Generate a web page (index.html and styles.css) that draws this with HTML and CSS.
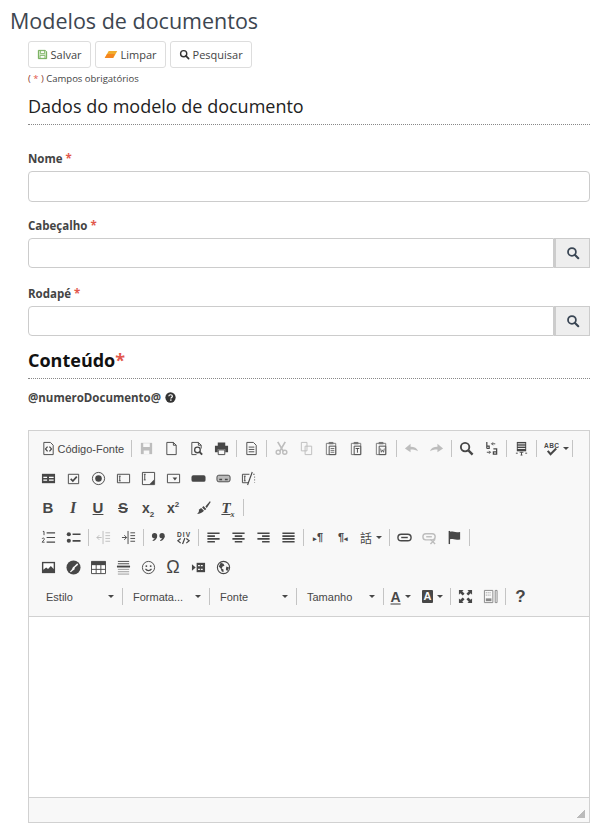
FILE: index.html
```html
<!DOCTYPE html>
<html lang="pt-BR">
<head>
    <meta charset="UTF-8">
    <meta name="viewport" content="width=device-width, initial-scale=1.0">
    <title>Modelos de documentos</title>
    <link rel="stylesheet" href="styles.css">
</head>
<body>
    <h1 class="titulo">Modelos de documentos</h1>

    <main class="pagina">
        <!-- Botoes de acao -->
        <div class="acoes">
            <button class="botao" type="button">
                <svg class="ico-botao" viewBox="0 0 16 16"><path d="M2 2h10l2 2v10H2z" fill="#cfe6c4" stroke="#6aa84f" stroke-width="1.4"/><path d="M5 2.500h6v4H5zM4.500 9.500h7v4h-7z" fill="#fff" stroke="#6aa84f"/></svg>
                Salvar
            </button>
            <button class="botao" type="button">
                <svg class="ico-botao ico-borracha" viewBox="0 2 18 11"><path d="M6 3h11l-5 9H1z" fill="#f0ad2e"/><path d="M4 7h10l-2.600 5H1z" fill="#f5861f"/></svg>
                Limpar
            </button>
            <button class="botao" type="button">
                <svg class="ico-botao" viewBox="0 0 16 16"><circle cx="6.800" cy="6.800" r="4.500" fill="none" stroke="#333" stroke-width="2"/><path d="M10 10l4 4" stroke="#333" stroke-width="2.400" stroke-linecap="round"/></svg>
                Pesquisar
            </button>
        </div>
        <p class="obrigatorios"><span class="parentese">( <span class="asterisco">*</span> )</span> Campos obrigatórios</p>

        <h2 class="secao">Dados do modelo de documento</h2>

        <div class="campo campo-nome">
            <label class="rotulo" for="nome">Nome <span class="asterisco">*</span></label>
            <input class="entrada" id="nome" type="text">
        </div>

        <div class="campo">
            <label class="rotulo" for="cabecalho">Cabeçalho <span class="asterisco">*</span></label>
            <div class="grupo">
                <input class="entrada entrada-grupo" id="cabecalho" type="text">
                <button class="lupa" type="button" aria-label="Pesquisar"><svg viewBox="0 0 16 16"><circle cx="6.800" cy="6.800" r="4.500" fill="none" stroke="#3a4654" stroke-width="2"/><path d="M10 10l4 4" stroke="#3a4654" stroke-width="2.400" stroke-linecap="round"/></svg></button>
            </div>
        </div>

        <div class="campo">
            <label class="rotulo" for="rodape">Rodapé <span class="asterisco">*</span></label>
            <div class="grupo">
                <input class="entrada entrada-grupo" id="rodape" type="text">
                <button class="lupa" type="button" aria-label="Pesquisar"><svg viewBox="0 0 16 16"><circle cx="6.800" cy="6.800" r="4.500" fill="none" stroke="#3a4654" stroke-width="2"/><path d="M10 10l4 4" stroke="#3a4654" stroke-width="2.400" stroke-linecap="round"/></svg></button>
            </div>
        </div>

        <h2 class="secao secao-conteudo">Conteúdo<span class="asterisco">*</span></h2>

        <p class="variavel">@numeroDocumento@
            <svg class="ico-ajuda" viewBox="0 0 16 16"><circle cx="8" cy="8" r="7.500" fill="#333"/><path d="M5.500 6.200C5.700 4.700 6.800 4 8.100 4c1.500 0 2.600.9 2.600 2.200 0 1.900-2.100 1.800-2.100 3.300" fill="none" stroke="#fff" stroke-width="1.800"/><rect x="7.500" y="10.800" width="2" height="2" fill="#fff"/></svg>
        </p>

        <!-- Editor de texto -->
        <section class="editor">
            <div class="barra">
                <div class="linha">
                    <span class="btn btn-fonte"><svg class="ico" viewBox="0 0 16 16"><path d="M3 1.500h7l3 3v10H3z" fill="none" stroke="currentColor"/><path d="M7 6L4.800 8.500 7 11M9 6l2.200 2.500L9 11" fill="none" stroke="currentColor" stroke-width="1.300"/></svg><span class="btn-texto">Código-Fonte</span></span>
                    <i class="sep"></i>
                    <span class="btn off"><svg class="ico" viewBox="0 0 16 16"><path d="M2 2h12v12H2z" fill="currentColor"/><path d="M4.500 2.500h7v4h-7zM5 10h6v4H5z" fill="#f8f8f8"/></svg></span>
                    <span class="btn"><svg class="ico" viewBox="0 0 16 16"><path d="M3 1.500h7l3 3v10H3zM10 1.500v3h3" fill="none" stroke="currentColor"/></svg></span>
                    <span class="btn"><svg class="ico" viewBox="0 0 16 16"><path d="M3 14.500v-13h7l3 3V8M10 1.500v3h3M3 14.500h5" fill="none" stroke="currentColor"/><circle cx="9" cy="9.500" r="3" fill="none" stroke="currentColor" stroke-width="1.400"/><path d="M11 11.500l3 3" stroke="currentColor" stroke-width="2"/></svg></span>
                    <span class="btn"><svg class="ico" viewBox="0 0 16 16"><path d="M4 1.500h8V5H4zM1 5h14v7h-3V9H4v3H1z" fill="currentColor"/><path d="M4.500 9.500h7v5h-7z" fill="#f8f8f8" stroke="currentColor"/></svg></span>
                    <i class="sep"></i>
                    <span class="btn"><svg class="ico" viewBox="0 0 16 16"><path d="M3 1.500h7l3 3v10H3z" fill="none" stroke="currentColor"/><path d="M5 6.500h6M5 9h6M5 11.500h6" stroke="currentColor"/></svg></span>
                    <i class="sep"></i>
                    <span class="btn off"><svg class="ico" viewBox="0 0 16 16"><circle cx="4.500" cy="12" r="2.200" fill="none" stroke="currentColor" stroke-width="1.500"/><circle cx="11.500" cy="12" r="2.200" fill="none" stroke="currentColor" stroke-width="1.500"/><path d="M4 1l6 10M12 1L6 11" stroke="currentColor" stroke-width="1.800"/></svg></span>
                    <span class="btn off"><svg class="ico" viewBox="0 0 16 16"><path d="M2.500 1.500h6v9h-6zM6.500 5.500h7v9h-7z" fill="#f8f8f8" stroke="currentColor"/></svg></span>
                    <span class="btn"><svg class="ico" viewBox="0 0 16 16"><path d="M2.500 2.500h10v12h-10z" fill="none" stroke="#777"/><path d="M5 1h5v2.500H5z" fill="#777"/><path d="M5.500 5.500h7v9h-7z" fill="#f8f8f8" stroke="currentColor"/><path d="M7 8h4M7 10h4M7 12h4" stroke="currentColor" stroke-width=".8"/></svg></span>
                    <span class="btn"><svg class="ico" viewBox="0 0 16 16"><path d="M2.500 2.500h10v12h-10z" fill="none" stroke="#777"/><path d="M5 1h5v2.500H5z" fill="#777"/><path d="M5.500 5.500h7v9h-7z" fill="#f8f8f8" stroke="currentColor"/><path d="M7 8h4M9 8v4.500" stroke="currentColor"/></svg></span>
                    <span class="btn"><svg class="ico" viewBox="0 0 16 16"><path d="M2.500 2.500h10v12h-10z" fill="none" stroke="#777"/><path d="M5 1h5v2.500H5z" fill="#777"/><path d="M5.500 5.500h7v9h-7z" fill="#f8f8f8" stroke="currentColor"/><path d="M7 8l.8 4 1.200-2.500 1.200 2.500.8-4" fill="none" stroke="currentColor" stroke-width=".8"/></svg></span>
                    <i class="sep"></i>
                    <span class="btn off"><svg class="ico" viewBox="0 0 16 16"><path d="M1 8l6-5v3c4 0 7 1.500 8 5-2-1.500-4-2-8-2v3z" fill="currentColor"/></svg></span>
                    <span class="btn off"><svg class="ico" viewBox="0 0 16 16"><path d="M15 8L9 3v3c-4 0-7 1.500-8 5 2-1.500 4-2 8-2v3z" fill="currentColor"/></svg></span>
                    <i class="sep"></i>
                    <span class="btn"><svg class="ico" viewBox="0 0 16 16"><circle cx="6.500" cy="6.500" r="4.500" fill="none" stroke="currentColor" stroke-width="2"/><path d="M10 10l4.500 4.500" stroke="currentColor" stroke-width="2.500"/></svg></span>
                    <span class="btn"><svg class="ico" viewBox="0 0 16 16"><path d="M3 1v7M3 5.500h2.500v2.500H3" fill="none" stroke="currentColor" stroke-width="1.300"/><path d="M8.500 3h3.500M9.500 1.500L8 3l1.500 1.500M3 12h3.500M5.500 10.500L7 12l-1.500 1.500" fill="none" stroke="currentColor"/><path d="M10 8.500h3.500V14H10v-2.500h3.500" fill="none" stroke="currentColor" stroke-width="1.300"/></svg></span>
                    <i class="sep"></i>
                    <span class="btn"><svg class="ico" viewBox="0 0 16 16"><path d="M3 1h10v10H3z" fill="currentColor"/><path d="M4 3h8M4 5.500h8M4 8h8" stroke="#f8f8f8"/><path d="M2 13h2M6 12h4M8 12v3M7 15h2M12 13h2" stroke="currentColor"/></svg></span>
                    <i class="sep"></i>
                    <span class="btn btn-seta"><svg class="ico" viewBox="0 0 16 16"><text class="ico-texto" x="0" y="7" textLength="16">ABC</text><path d="M4 10.500l3 3.500 6-6" fill="none" stroke="currentColor" stroke-width="2.200"/></svg><i class="seta"></i></span>
                    <i class="sep"></i>
                </div>

                <div class="linha">
                    <span class="btn"><svg class="ico" viewBox="0 0 16 16"><path d="M1 3h14v10H1z" fill="currentColor"/><path d="M2.500 6h4v1.500h-4zM2.500 9h4v1.500h-4zM8.500 6h5v1.500h-5zM8.500 9h5v1.500h-5z" fill="#fff"/></svg></span>
                    <span class="btn"><svg class="ico" viewBox="0 0 16 16"><path d="M2.500 3.500h11v10h-11z" fill="none" stroke="currentColor"/><path d="M5 8.500l2.300 2.300L11.500 6" fill="none" stroke="currentColor" stroke-width="1.800"/></svg></span>
                    <span class="btn"><svg class="ico" viewBox="0 0 16 16"><circle cx="8" cy="8" r="6.500" fill="none" stroke="currentColor"/><circle cx="8" cy="8" r="3.500" fill="currentColor"/></svg></span>
                    <span class="btn"><svg class="ico" viewBox="0 0 16 16"><path d="M1.500 3.500h13v9h-13z" fill="none" stroke="currentColor"/><path d="M3 5.500h2M4 5.500v5M3 10.500h2" stroke="currentColor"/></svg></span>
                    <span class="btn"><svg class="ico" viewBox="0 0 16 16"><path d="M1.500 1.500h13v13h-13z" fill="none" stroke="currentColor"/><path d="M3 3.500h2M4 3.500v6M3 9.500h2" stroke="currentColor"/><path d="M14 9v5H9z" fill="currentColor"/></svg></span>
                    <span class="btn"><svg class="ico" viewBox="0 0 16 16"><path d="M1.500 3.500h13v9h-13z" fill="none" stroke="currentColor"/><path d="M7 7h5l-2.500 3z" fill="currentColor"/></svg></span>
                    <span class="btn"><svg class="ico" viewBox="0 0 16 16"><rect x="0.500" y="4.500" width="15" height="7" rx="2" fill="currentColor"/></svg></span>
                    <span class="btn"><svg class="ico" viewBox="0 0 16 16"><rect x="1" y="4.500" width="14" height="7" rx="2" fill="#bbb" stroke="currentColor"/><path d="M3.500 9h3M9.500 9h3" stroke="currentColor" stroke-width="1.500"/></svg></span>
                    <span class="btn"><svg class="ico" viewBox="0 0 16 16"><path d="M9 3.500H1.500v9h6M13 3.500h1.500M14.500 6v1M14.500 9v1M14.500 12v.500" fill="none" stroke="currentColor"/><path d="M3 5.500h2M4 5.500v5M3 10.500h2" stroke="currentColor"/><path d="M12 1L7 15" stroke="currentColor" stroke-width="1.200"/></svg></span>
                </div>

                <div class="linha">
                    <span class="btn"><b class="glifo glifo-letra">B</b></span>
                    <span class="btn"><b class="glifo glifo-i">I</b></span>
                    <span class="btn"><b class="glifo glifo-letra glifo-u">U</b></span>
                    <span class="btn"><b class="glifo glifo-letra glifo-s">S</b></span>
                    <span class="btn"><b class="glifo">x<sub class="indice">2</sub></b></span>
                    <span class="btn"><b class="glifo">x<sup class="indice">2</sup></b></span>
                    <i class="espaco"></i>
                    <span class="btn"><svg class="ico" viewBox="0 0 16 16"><path d="M15 1l-5 6 1.500 1.500L15.500 2.500z" fill="currentColor"/><path d="M8 6.500l3 3-1.500 1.500-3-3zM5.500 8.500l3 3C7 13.500 4 15 1 15c2-1.500 2.500-3 2-4.500z" fill="currentColor"/></svg></span>
                    <span class="btn"><b class="glifo glifo-i glifo-t">T<sub class="indice">x</sub></b></span>
                    <i class="sep"></i>
                </div>

                <div class="linha">
                    <span class="btn"><svg class="ico" viewBox="0 0 16 16"><path d="M6 3h9M6 8h9M6 13h9" stroke="currentColor" stroke-width="1.300"/><path d="M2 1.500h1.200v4M1 9.500c1-1.500 3-1 2.500.5L1.200 13h2.600" fill="none" stroke="currentColor"/></svg></span>
                    <span class="btn"><svg class="ico" viewBox="0 0 16 16"><circle cx="3" cy="4.500" r="2.200" fill="currentColor"/><circle cx="3" cy="11.500" r="2.200" fill="currentColor"/><path d="M7 4.500h8.500M7 11.500h8.500" stroke="currentColor" stroke-width="1.800"/></svg></span>
                    <i class="sep"></i>
                    <span class="btn off"><svg class="ico" viewBox="0 0 16 16"><path d="M7.500 1v14M10 3h5M10 6h5M10 9h5M10 12h5M1 8h5M3.500 5.500L1 8l2.500 2.500" fill="none" stroke="currentColor"/></svg></span>
                    <span class="btn"><svg class="ico" viewBox="0 0 16 16"><path d="M7.500 1v14M10 3h5M10 6h5M10 9h5M10 12h5M1 8h5M3.500 5.500L6 8l-2.500 2.500" fill="none" stroke="currentColor"/></svg></span>
                    <i class="sep"></i>
                    <span class="btn"><svg class="ico" viewBox="0 0 16 16"><circle cx="3.800" cy="6" r="2.800" fill="currentColor"/><path d="M6.600 6c0 3-2 5-4.500 5.800l-.5-1C3.500 10 4.500 8.500 4.500 7z" fill="currentColor"/><circle cx="11.800" cy="6" r="2.800" fill="currentColor"/><path d="M14.600 6c0 3-2 5-4.500 5.800l-.5-1c1.900-.8 2.900-2.300 2.900-3.800z" fill="currentColor"/></svg></span>
                    <span class="btn"><svg class="ico" viewBox="0 0 16 16"><text class="ico-texto" x="1" y="7" textLength="14">DIV</text><path d="M5 9l-3 2.500L5 14M11 9l3 2.500-3 2.500M9.500 8.500L7 15" fill="none" stroke="currentColor" stroke-width="1.300"/></svg></span>
                    <i class="sep"></i>
                    <span class="btn"><svg class="ico" viewBox="0 0 16 16"><path d="M1.500 2.500h13M1.500 5.500h8M1.500 8.500h13M1.500 11.500h8" stroke="currentColor" stroke-width="1.700" transform="translate(0 1)"/></svg></span>
                    <span class="btn"><svg class="ico" viewBox="0 0 16 16"><path d="M1.500 3.500h13M4 6.500h8M1.500 9.500h13M4 12.500h8" stroke="currentColor" stroke-width="1.700"/></svg></span>
                    <span class="btn"><svg class="ico" viewBox="0 0 16 16"><path d="M1.500 3.500h13M6.500 6.500h8M1.500 9.500h13M6.500 12.500h8" stroke="currentColor" stroke-width="1.700"/></svg></span>
                    <span class="btn"><svg class="ico" viewBox="0 0 16 16"><path d="M1.500 3.500h13M1.500 6.500h13M1.500 9.500h13M1.500 12.500h13" stroke="currentColor" stroke-width="1.700"/></svg></span>
                    <i class="sep"></i>
                    <span class="btn"><b class="glifo glifo-p"><small class="seta-p">▸</small>¶</b></span>
                    <span class="btn"><b class="glifo glifo-p">¶<small class="seta-p">◂</small></b></span>
                    <span class="btn btn-seta"><span class="glifo glifo-lang">話</span><i class="seta"></i></span>
                    <i class="sep"></i>
                    <span class="btn"><svg class="ico" viewBox="0 0 16 16"><rect x="1" y="4.500" width="14" height="7" rx="3.500" fill="none" stroke="currentColor" stroke-width="1.500"/><path d="M4.500 8h7" stroke="currentColor" stroke-width="1.500"/></svg></span>
                    <span class="btn off"><svg class="ico" viewBox="0 0 16 16"><rect x="1" y="4" width="13" height="6.500" rx="3" fill="none" stroke="currentColor" stroke-width="1.500"/><path d="M4.500 7.200h6" stroke="currentColor" stroke-width="1.500"/><path d="M9 10l5 5M14 10l-5 5" stroke="currentColor" stroke-width="1.500"/></svg></span>
                    <span class="btn"><svg class="ico" viewBox="0 0 16 16"><path d="M2.500 1v14" stroke="currentColor" stroke-width="1.500"/><path d="M3 2c3-1 5 1 11 0v8c-6 1-8-1-11 0z" fill="currentColor"/></svg></span>
                    <i class="sep"></i>
                </div>

                <div class="linha">
                    <span class="btn"><svg class="ico" viewBox="0 0 16 16"><path d="M1 2h14v12H1z" fill="currentColor"/><path d="M2.500 3.500h11v6l-3-3-3 3-2-1.500-3 2.500z" fill="#fff"/></svg></span>
                    <span class="btn"><svg class="ico" viewBox="0 0 16 16"><circle cx="8" cy="8" r="7.500" fill="currentColor"/><path d="M12 3.500L8.500 7l-1 .5-1.500 3-1.800 1.800 1 .7L7 11.500l2-1.500.500-2 3.500-3z" fill="#f8f8f8"/></svg></span>
                    <span class="btn"><svg class="ico" viewBox="0 0 16 16"><path d="M.5 1.500h15v13H.5z" fill="#fff" stroke="currentColor"/><path d="M.5 1.500h15v4H.5z" fill="currentColor"/><path d="M.5 10h15M5.500 5v9.500M10.500 5v9.500" stroke="currentColor"/></svg></span>
                    <span class="btn"><svg class="ico" viewBox="0 0 16 16"><path d="M2 1.500h12M2 4h12" stroke="currentColor"/><path d="M1 7h14" stroke="currentColor" stroke-width="2"/><path d="M2 10h12M2 12.500h12M2 15h12" stroke="#999"/></svg></span>
                    <span class="btn"><svg class="ico" viewBox="0 0 16 16"><circle cx="8" cy="8" r="6.500" fill="none" stroke="currentColor"/><circle cx="5.700" cy="6.500" r="1" fill="currentColor"/><circle cx="10.300" cy="6.500" r="1" fill="currentColor"/><path d="M4.800 9.500c1.500 2.400 4.900 2.400 6.400 0" fill="none" stroke="currentColor" stroke-width="1.200"/></svg></span>
                    <span class="btn"><span class="glifo glifo-omega">Ω</span></span>
                    <span class="btn"><svg class="ico" viewBox="0 0 16 16"><path d="M1 4.500l4 3.500-4 3.500z" fill="currentColor"/><path d="M6 3h9v10H6z" fill="currentColor"/><path d="M7.500 6h6M7.500 10h6" stroke="#f8f8f8" stroke-width="1.200" stroke-dasharray="2 1"/></svg></span>
                    <span class="btn"><svg class="ico" viewBox="0 0 16 16"><circle cx="8" cy="8" r="6.500" fill="none" stroke="currentColor" stroke-width="1.200"/><path d="M5 3l3 1 1 2-2 1-1 2 2 1v3l-2-1-1-3-2-2zM11 7l3 1-2 4-1.500-2z" fill="currentColor"/></svg></span>
                </div>

                <div class="linha linha-combos">
                    <span class="combo">Estilo<i class="seta"></i></span>
                    <i class="sep"></i>
                    <span class="combo">Formata...<i class="seta"></i></span>
                    <i class="sep"></i>
                    <span class="combo">Fonte<i class="seta"></i></span>
                    <i class="sep"></i>
                    <span class="combo">Tamanho<i class="seta"></i></span>
                    <i class="sep"></i>
                    <span class="btn btn-seta"><span class="glifo glifo-a">A</span><i class="seta"></i></span>
                    <span class="btn btn-seta"><span class="glifo glifo-af">A</span><i class="seta"></i></span>
                    <i class="sep"></i>
                    <span class="btn"><svg class="ico" viewBox="0 0 16 16"><path d="M1 1h5L4.500 2.500 7 5 5 7 2.500 4.500 1 6zM15 1v5l-1.500-1.500L11 7 9 5l2.500-2.500L10 1zM1 15v-5l1.500 1.500L5 9l2 2-2.500 2.500L6 15zM15 15h-5l1.500-1.500L9 11l2-2 2.500 2.500L15 10z" fill="currentColor"/></svg></span>
                    <span class="btn off-medio"><svg class="ico" viewBox="0 0 16 16"><path d="M1.500 1.500h9v13h-9zM13 1.500h2v13h-2z" fill="none" stroke="currentColor"/><path d="M3 10h6v3H3z" fill="currentColor"/><path d="M3 4h6M3 6.500h6" stroke="currentColor" stroke-dasharray="1 1"/></svg></span>
                    <i class="sep"></i>
                    <span class="btn"><span class="glifo glifo-ajuda">?</span></span>
                </div>
            </div>

            <div class="area"></div>

            <div class="rodape-editor"><i class="redimensionar"></i></div>
        </section>
    </main>
</body>
</html>
```

FILE: styles.css
```css
/* Estilos gerais */
body {
    font-family: "Open Sans", sans-serif;
    margin: 0;
    padding: 0;
    background-color: #fff;
    color: #333;
}

.titulo {
    margin: 0;
    padding: 6px 0 0 10px;
    height: 35px;
    font-size: 21.500px;
    line-height: 30px;
    font-weight: 400;
    color: #3d4650;
}

.pagina {
    padding: 0 14px 0 28px;
}

/* Botoes de acao */
.acoes {
    display: flex;
    gap: 4.500px;
}

.botao {
    display: flex;
    align-items: center;
    gap: 2.500px;
    height: 27px;
    padding: 0 8px;
    font-family: "Open Sans", sans-serif;
    font-size: 11px;
    color: #444;
    background-color: #fff;
    border: 1px solid #ddd;
    border-radius: 3px;
}

.ico-botao {
    width: 11px;
    height: 11px;
}

.ico-borracha {
    width: 14px;
    height: 9px;
}

.obrigatorios {
    margin: 4px 0 0;
    font-size: 9.500px;
    line-height: 14px;
    color: #444;
}

.parentese {
    color: #8a3a32;
}

.asterisco {
    color: #e2574c;
}

.secao {
    margin: 7px 0 0;
    padding-bottom: 5px;
    font-size: 18px;
    line-height: 26px;
    font-weight: 400;
    color: #222;
    border-bottom: 1px dotted #888;
}

/* Campos */
.campo {
    margin-top: 15px;
}

.campo-nome {
    margin-top: 25px;
}

.rotulo {
    display: block;
    height: 17px;
    margin-bottom: 4px;
    font-size: 11.500px;
    line-height: 17px;
    font-weight: 700;
    color: #444;
}

.entrada {
    display: block;
    box-sizing: border-box;
    width: 100%;
    height: 31px;
    padding: 0 8px;
    background-color: #fff;
    border: 1px solid #ccc;
    border-radius: 4px;
}

.grupo {
    display: flex;
    padding-bottom: 2px;
}

.entrada-grupo {
    flex: 1;
    height: 30px;
    border-radius: 4px 0 0 4px;
}

.lupa {
    display: flex;
    align-items: center;
    justify-content: center;
    width: 36px;
    height: 30px;
    padding: 0;
    background-color: #eee;
    border: 1px solid #ccc;
    border-left-width: 2px;
}

.lupa svg {
    width: 14px;
    height: 14px;
}

.secao-conteudo {
    margin-top: 9px;
    font-weight: 700;
    color: #111;
}

.variavel {
    display: flex;
    align-items: center;
    gap: 4px;
    margin: 10px 0 0;
    height: 17px;
    font-size: 11.500px;
    font-weight: 700;
    color: #444;
}

.ico-ajuda {
    width: 11px;
    height: 11px;
}

/* Editor */
.editor {
    box-sizing: border-box;
    height: 393px;
    margin-top: 24px;
    display: flex;
    flex-direction: column;
    background-color: #f8f8f8;
    border: 1px solid #d1d1d1;
}

.barra {
    height: 186px;
    padding: 3px 0 0 6.500px;
    box-sizing: border-box;
    border-bottom: 1px solid #d1d1d1;
    color: #474747;
}

.linha {
    display: flex;
    align-items: center;
    height: 29.600px;
}

.linha-combos {
    padding-left: 2.500px;
}

.btn {
    display: flex;
    align-items: center;
    justify-content: center;
    flex: none;
    width: 25px;
    height: 24px;
}

.btn-fonte {
    width: 93.500px;
    justify-content: flex-start;
    padding-left: 5px;
    box-sizing: border-box;
}

.btn-texto {
    margin-left: 2px;
    font-family: "Liberation Sans", sans-serif;
    font-size: 11px;
    white-space: nowrap;
    color: #474747;
}

.btn-seta {
    width: 31px;
    justify-content: flex-start;
    padding-left: 4.500px;
    box-sizing: border-box;
}

.ico {
    display: block;
    flex: none;
    width: 15px;
    height: 15px;
}

.ico-texto {
    font-family: "Liberation Sans", sans-serif;
    font-size: 7px;
    font-weight: 700;
    fill: currentColor;
}

.off {
    color: #bdbdbd;
}

.off-medio {
    color: #888;
}

.sep {
    flex: none;
    width: 1px;
    height: 17px;
    margin: 0 2px;
    background-color: #c4c4c4;
}

.espaco {
    flex: none;
    width: 5px;
}

.seta {
    flex: none;
    width: 0;
    height: 0;
    margin-left: 4px;
    border-top: 3px solid #474747;
    border-left: 3px solid transparent;
    border-right: 3px solid transparent;
}

.combo {
    display: flex;
    align-items: center;
    flex: none;
    box-sizing: border-box;
    width: 82px;
    height: 24px;
    padding: 0 6px 0 8px;
    font-family: "Liberation Sans", sans-serif;
    font-size: 11px;
    color: #474747;
}

.combo .seta {
    margin-left: auto;
}

/* Glifos dos botoes */
.glifo {
    font-family: "Liberation Sans", sans-serif;
    font-size: 14px;
    line-height: 16px;
    font-weight: 700;
    color: #474747;
}

.glifo-letra {
    font-size: 15px;
}

.glifo-i {
    font-family: "Liberation Serif", serif;
    font-size: 16px;
    font-style: italic;
}

.glifo-u {
    text-decoration: underline;
}

.glifo-s {
    text-decoration: line-through;
}

.glifo-t {
    font-size: 15px;
    text-decoration: underline;
}

.indice {
    font-size: 8px;
    line-height: 0;
}

.glifo-p {
    font-size: 11px;
}

.seta-p {
    font-size: 7px;
}

.glifo-lang {
    font-family: "Noto Sans CJK TC", sans-serif;
    font-size: 12px;
    font-weight: 400;
}

.glifo-omega {
    font-size: 18px;
    font-weight: 400;
}

.glifo-a {
    text-decoration: underline;
    text-decoration-color: #999;
    text-underline-offset: 1px;
    text-decoration-thickness: 2px;
}

.glifo-af {
    padding: 0 2px;
    font-size: 11px;
    line-height: 13px;
    color: #f8f8f8;
    background-color: #474747;
    border-radius: 1px;
}

.glifo-ajuda {
    font-size: 17px;
}

.area {
    flex: 1;
    background-color: #fff;
}

.rodape-editor {
    position: relative;
    height: 24px;
    border-top: 1px solid #d1d1d1;
}

.redimensionar {
    position: absolute;
    right: 4px;
    bottom: 4px;
    width: 9px;
    height: 9px;
    background: linear-gradient(135deg, transparent 50%, #bbb 50%);
}
```
